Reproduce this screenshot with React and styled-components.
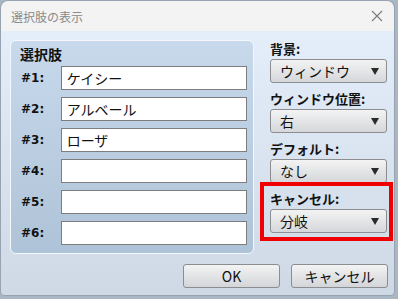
import React from 'react';
import styled, { createGlobalStyle } from 'styled-components';

const GlobalStyle = createGlobalStyle`
  html, body { margin: 0; padding: 0; }
  body {
    background: #a9b6c4;
    width: 398px;
    height: 299px;
    overflow: hidden;
    font-family: "Noto Sans CJK JP", "DejaVu Sans", sans-serif;
  }
`;

const Window = styled.div`
  margin: 1px 0 0 1px;
  width: 393px;
  height: 294px;
  border-radius: 7px 7px 4px 4px;
  overflow: hidden;
  display: flex;
  flex-direction: column;
  box-shadow: 0 0 0 1px rgba(120, 130, 145, 0.35);
`;

const TitleBar = styled.div`
  height: 30px;
  flex: none;
  background: #f3f3f3;
  display: flex;
  align-items: center;
  justify-content: space-between;
  padding: 0 6px 0 10px;
`;

const Title = styled.span`
  font-size: 12px;
  color: #8a8a8a;
`;

const Body = styled.div`
  flex: 1;
  background: linear-gradient(#e4eefa, #ced9e5);
  padding: 9px 6px 7px 9px;
  display: flex;
  flex-direction: column;
  gap: 10px;
`;

const Main = styled.div`
  display: flex;
  gap: 16px;
`;

const Group = styled.div`
  width: 244px;
  height: 214px;
  box-sizing: border-box;
  border: 1px solid #f4f8fc;
  border-radius: 6px;
  background: linear-gradient(#c7d9eb, #afc3d8);
  padding: 4px 6px 0 9px;
  display: flex;
  flex-direction: column;
`;

const GroupTitle = styled.div`
  height: 19px;
  line-height: 19px;
  font-size: 14px;
  font-weight: bold;
  color: #111;
  padding-left: 4px;
  margin-left: -4px;
`;

const Rows = styled.div`
  margin-top: 2px;
  display: flex;
  flex-direction: column;
  gap: 7px;
`;

const Row = styled.div`
  display: flex;
  align-items: center;
  height: 24px;
`;

const RowLabel = styled.span`
  width: 40px;
  padding-left: 1px;
  font-family: "DejaVu Sans", sans-serif;
  font-size: 12px;
  font-weight: bold;
  color: #111;
`;

const TextBox = styled.div`
  width: 188px;
  height: 24px;
  box-sizing: border-box;
  border: 1px solid #7d7d7d;
  background: #fff;
  padding-left: 5px;
  font-size: 14px;
  line-height: 22px;
  color: #111;
`;

const Side = styled.div`
  width: 117px;
  display: flex;
  flex-direction: column;
  gap: 7px;
`;

const Field = styled.div`
  position: relative;
  display: flex;
  flex-direction: column;
`;

const FieldLabel = styled.div`
  height: 19px;
  line-height: 17px;
  font-size: 13px;
  font-weight: bold;
  color: #111;
  white-space: nowrap;
`;

const Select = styled.div`
  height: 24px;
  box-sizing: border-box;
  border: 1px solid #8b8d90;
  border-radius: 3px;
  background: linear-gradient(#f3f3f3, #d5d7da);
  display: flex;
  align-items: center;
  justify-content: space-between;
  padding: 0 7px 0 9px;
  font-size: 14px;
  color: #111;
`;

const Arrow = styled.span`
  width: 0;
  height: 0;
  border-left: 4px solid transparent;
  border-right: 4px solid transparent;
  border-top: 7px solid #2a2a2a;
`;

const Highlight = styled.div`
  position: absolute;
  left: -10px;
  right: -6px;
  top: -8px;
  bottom: -8px;
  border: 4px solid #f00000;
  pointer-events: none;
`;

const Buttons = styled.div`
  display: flex;
  justify-content: flex-end;
  gap: 11px;
`;

const Button = styled.div`
  width: 97px;
  height: 24px;
  box-sizing: border-box;
  border: 1px solid #8b8d90;
  border-radius: 3px;
  background: linear-gradient(#f3f3f3, #d3d5d8);
  display: flex;
  align-items: center;
  justify-content: center;
  font-size: 14px;
  color: #111;
`;

const choices = ['ケイシー', 'アルベール', 'ローザ', '', '', ''];

const fields = [
  { label: '背景:', value: 'ウィンドウ' },
  { label: 'ウィンドウ位置:', value: '右' },
  { label: 'デフォルト:', value: 'なし' },
  { label: 'キャンセル:', value: '分岐', marked: true },
];

const App = () => (
  <>
    <GlobalStyle />
    <Window>
      <TitleBar>
        <Title>選択肢の表示</Title>
        <svg width="22" height="22" viewBox="0 0 22 22">
          <path d="M6 6 L16 16 M16 6 L6 16" stroke="#7a7a7a" strokeWidth="1.1" />
        </svg>
      </TitleBar>
      <Body>
        <Main>
          <Group>
            <GroupTitle>選択肢</GroupTitle>
            <Rows>
              {choices.map((c, i) => (
                <Row key={i}>
                  <RowLabel>#{i + 1}:</RowLabel>
                  <TextBox>{c}</TextBox>
                </Row>
              ))}
            </Rows>
          </Group>
          <Side>
            {fields.map((f) => (
              <Field key={f.label}>
                <FieldLabel>{f.label}</FieldLabel>
                <Select>
                  <span>{f.value}</span>
                  <Arrow />
                </Select>
                {f.marked && <Highlight />}
              </Field>
            ))}
          </Side>
        </Main>
        <Buttons>
          <Button>OK</Button>
          <Button>キャンセル</Button>
        </Buttons>
      </Body>
    </Window>
  </>
);

export default App;
